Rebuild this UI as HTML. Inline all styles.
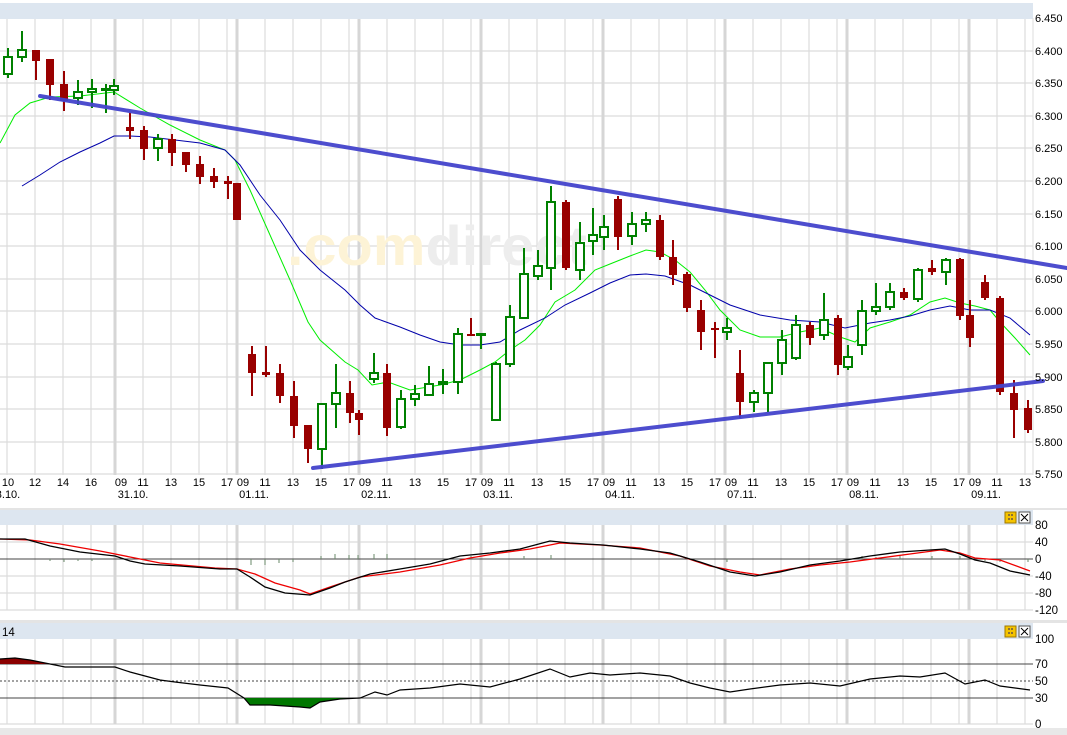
<!DOCTYPE html>
<html><head><meta charset="utf-8"><style>
html,body{margin:0;padding:0;background:#fff;}
svg{display:block;font-family:"Liberation Sans",sans-serif;}
</style></head><body>
<svg width="1067" height="735" viewBox="0 0 1067 735" xmlns="http://www.w3.org/2000/svg">
<rect width="1067" height="735" fill="#fff"/>
<!-- headers -->
<rect x="0" y="3" width="1033" height="16" fill="#dde6f0"/>
<rect x="0" y="508" width="1067" height="2" fill="#e4e4e4"/>
<rect x="0" y="510" width="1033" height="15" fill="#dde6f0"/>
<rect x="0" y="620" width="1067" height="3" fill="#e4e4e4"/>
<rect x="0" y="623" width="1033" height="16" fill="#dde6f0"/>
<rect x="0" y="728" width="1067" height="7" fill="#e8e8e8"/>
<line x1="1033" y1="18" x2="1033" y2="475" stroke="#ddd"/>
<!-- vertical grid -->
<g stroke="#dcdcdc" stroke-width="1.2">
<path d="M7 19V475M35 19V475M63 19V475M91 19V475M143 19V475M171 19V475M199 19V475M227 19V475M265 19V475M293 19V475M321 19V475M349 19V475M387 19V475M415 19V475M443 19V475M471 19V475M509 19V475M537 19V475M565 19V475M593 19V475M631 19V475M659 19V475M687 19V475M715 19V475M753 19V475M781 19V475M809 19V475M837 19V475M875 19V475M903 19V475M931 19V475M959 19V475M997 19V475M1025 19V475"/>
<path d="M7 525V610M35 525V610M63 525V610M91 525V610M143 525V610M171 525V610M199 525V610M227 525V610M265 525V610M293 525V610M321 525V610M349 525V610M387 525V610M415 525V610M443 525V610M471 525V610M509 525V610M537 525V610M565 525V610M593 525V610M631 525V610M659 525V610M687 525V610M715 525V610M753 525V610M781 525V610M809 525V610M837 525V610M875 525V610M903 525V610M931 525V610M959 525V610M997 525V610M1025 525V610"/>
<path d="M7 639V724M35 639V724M63 639V724M91 639V724M143 639V724M171 639V724M199 639V724M227 639V724M265 639V724M293 639V724M321 639V724M349 639V724M387 639V724M415 639V724M443 639V724M471 639V724M509 639V724M537 639V724M565 639V724M593 639V724M631 639V724M659 639V724M687 639V724M715 639V724M753 639V724M781 639V724M809 639V724M837 639V724M875 639V724M903 639V724M931 639V724M959 639V724M997 639V724M1025 639V724"/>
<path d="M0 51H1033M0 83H1033M0 116H1033M0 148H1033M0 181H1033M0 214H1033M0 246H1033M0 279H1033M0 311H1033M0 344H1033M0 377H1033M0 409H1033M0 442H1033M0 474H1033"/>
<path d="M0 542H1033M0 576H1033M0 593H1033M0 610H1033M0 724H1033"/>
</g>
<g stroke="#d6d6d6" stroke-width="3">
<path d="M115 19V475M237 19V475M359 19V475M481 19V475M603 19V475M725 19V475M847 19V475M969 19V475"/>
<path d="M115 525V610M237 525V610M359 525V610M481 525V610M603 525V610M725 525V610M847 525V610M969 525V610"/>
<path d="M115 639V724M237 639V724M359 639V724M481 639V724M603 639V724M725 639V724M847 639V724M969 639V724"/>
</g>
<!-- watermark -->
<text x="287" y="265" font-size="56" font-weight="bold" fill="#fdf3d6" textLength="300" lengthAdjust="spacingAndGlyphs">.com<tspan fill="#ededed">direct</tspan></text>
<!-- MAs -->
<polyline fill="none" stroke="#00ee00" stroke-width="1" points="0,143 15,115 30,103 50,97 80,96 114,92 140,108 170,125 200,140 225,150 235,160 250,190 270,235 290,280 308,322 320,340 345,362 358,370 372,385 388,382 410,390 440,385 460,380 480,370 495,362 510,350 525,340 540,325 555,302 575,290 595,270 610,264 630,256 646,250 660,252 675,260 690,272 705,290 720,310 740,330 760,337 780,337 800,332 820,328 840,337 855,342 870,328 890,322 910,315 930,302 945,298 960,303 975,306 990,310 1000,322 1015,338 1030,355"/>
<polyline fill="none" stroke="#0000aa" stroke-width="1" points="22,186 40,175 60,162 80,152 100,143 114,136 130,136 150,137 175,140 200,143 225,150 240,165 260,195 280,220 300,250 320,270 345,290 360,305 375,318 400,327 420,335 440,342 460,345 480,345 500,342 520,330 545,318 565,305 590,293 610,283 630,275 646,274 665,276 690,285 710,295 730,305 760,315 790,320 820,322 845,328 870,323 890,320 910,316 930,310 950,306 970,310 990,310 1010,318 1030,335"/>
<!-- red candles -->
<g stroke="#990000" stroke-width="2" fill="#990000">
<path d="M36 50V80M50 59V100M64 71V111M130 113V139M144 126V160M172 134V166M186 153V172M200 156V184M214 168V188M228 176V199M240 183V220M252 346V396M266 346V377M280 364V403M294 381V438M308 425V463M350 381V423M359 410V435M387 364V436M471 318V335M566 200V270M618 196V250M660 215V260M673 240V285M687 272V312M701 300V350M715 322V358M740 350V418M810 322V345M838 315V375M904 288V300M932 260V275M960 258V320M970 300V347M985 275V300M1000 296V395M1014 380V438M1028 400V433" fill="none"/>
</g>
<g fill="#990000">
<rect x="32" y="50" width="8" height="11"/><rect x="46" y="59" width="8" height="26"/><rect x="60" y="84" width="8" height="17"/>
<rect x="126" y="127" width="8" height="4"/><rect x="140" y="130" width="8" height="19"/><rect x="168" y="139" width="8" height="14"/>
<rect x="182" y="152" width="8" height="13"/><rect x="196" y="164" width="8" height="13"/><rect x="210" y="176" width="8" height="6"/>
<rect x="224" y="181" width="8" height="3"/><rect x="233" y="183" width="8" height="37"/><rect x="248" y="354" width="8" height="19"/>
<rect x="262" y="372" width="8" height="3"/><rect x="276" y="373" width="8" height="23"/><rect x="290" y="396" width="8" height="30"/>
<rect x="304" y="425" width="8" height="24"/><rect x="346" y="393" width="8" height="20"/><rect x="355" y="413" width="8" height="7"/>
<rect x="383" y="373" width="8" height="55"/><rect x="467" y="334" width="8" height="2"/><rect x="562" y="202" width="8" height="66"/>
<rect x="614" y="199" width="8" height="38"/><rect x="656" y="220" width="8" height="37"/><rect x="669" y="257" width="8" height="18"/>
<rect x="683" y="274" width="8" height="34"/><rect x="697" y="310" width="8" height="22"/><rect x="711" y="328" width="8" height="2"/>
<rect x="736" y="373" width="8" height="29"/><rect x="806" y="325" width="8" height="13"/><rect x="834" y="318" width="8" height="47"/>
<rect x="900" y="292" width="8" height="6"/><rect x="928" y="268" width="8" height="4"/><rect x="956" y="259" width="8" height="57"/>
<rect x="966" y="315" width="8" height="23"/><rect x="981" y="282" width="8" height="16"/><rect x="996" y="298" width="8" height="94"/>
<rect x="1010" y="393" width="8" height="17"/><rect x="1024" y="408" width="8" height="22"/>
</g>
<!-- green candles -->
<g stroke="#008000" stroke-width="2" fill="#fff">
<path d="M8 48V78M22 31V62M78 80V105M92 79V108M106 84V113M114 79V95M158 134V161M322 403V469M336 364V428M374 353V383M401 390V429M415 385V406M429 366V395M443 369V394M458 328V394M481 334V349M496 362V421M510 305V367M524 248V318M538 250V280M551 186V290M580 222V280M593 208V255M604 215V250M632 212V245M646 212V232M727 318V340M754 390V412M768 362V412M782 330V375M796 315V360M824 293V340M848 345V370M862 300V355M876 283V315M890 283V310M918 268V302M946 258V285"/>
<rect x="4" y="57" width="8" height="17"/><rect x="18" y="50" width="8" height="7"/><rect x="74" y="92" width="8" height="6"/>
<rect x="88" y="89" width="8" height="3"/><rect x="102" y="89" width="8" height="1"/><rect x="110" y="86" width="8" height="4"/>
<rect x="154" y="139" width="8" height="9"/><rect x="318" y="404" width="8" height="45"/><rect x="332" y="393" width="8" height="11"/>
<rect x="370" y="373" width="8" height="6"/><rect x="397" y="399" width="8" height="28"/><rect x="411" y="394" width="8" height="5"/>
<rect x="425" y="384" width="8" height="11"/><rect x="439" y="382" width="8" height="2"/><rect x="454" y="334" width="8" height="48"/>
<rect x="477" y="334" width="8" height="1"/><rect x="492" y="364" width="8" height="56"/><rect x="506" y="317" width="8" height="47"/>
<rect x="520" y="274" width="8" height="44"/><rect x="534" y="266" width="8" height="10"/><rect x="547" y="202" width="8" height="66"/>
<rect x="576" y="243" width="8" height="27"/><rect x="589" y="235" width="8" height="6"/><rect x="600" y="227" width="8" height="10"/>
<rect x="628" y="224" width="8" height="12"/><rect x="642" y="220" width="8" height="4"/><rect x="723" y="328" width="8" height="4"/>
<rect x="750" y="393" width="8" height="9"/><rect x="764" y="363" width="8" height="30"/><rect x="778" y="340" width="8" height="23"/>
<rect x="792" y="325" width="8" height="33"/><rect x="820" y="320" width="8" height="15"/><rect x="844" y="357" width="8" height="10"/>
<rect x="858" y="311" width="8" height="34"/><rect x="872" y="307" width="8" height="4"/><rect x="886" y="292" width="8" height="15"/>
<rect x="914" y="270" width="8" height="29"/><rect x="942" y="260" width="8" height="12"/>
</g>
<!-- trendlines -->
<g stroke="#4444cc" stroke-width="4" stroke-linecap="round" opacity="0.95">
<line x1="40" y1="96" x2="1067" y2="268"/>
<line x1="313" y1="468" x2="1043" y2="381"/>
</g>
<!-- axis labels main -->
<g font-size="11" fill="#000">
<text x="1035" y="22">6.450</text><text x="1035" y="55">6.400</text><text x="1035" y="87">6.350</text><text x="1035" y="120">6.300</text>
<text x="1035" y="152">6.250</text><text x="1035" y="185">6.200</text><text x="1035" y="218">6.150</text><text x="1035" y="250">6.100</text>
<text x="1035" y="283">6.050</text><text x="1035" y="315">6.000</text><text x="1035" y="348">5.950</text><text x="1035" y="381">5.900</text>
<text x="1035" y="413">5.850</text><text x="1035" y="446">5.800</text><text x="1035" y="478">5.750</text>
</g>
<g font-size="11" fill="#000" text-anchor="middle">
<text x="8" y="486">10</text><text x="35" y="486">12</text><text x="63" y="486">14</text><text x="91" y="486">16</text>
<text x="121" y="486">09</text><text x="143" y="486">11</text><text x="171" y="486">13</text><text x="199" y="486">15</text><text x="227" y="486">17</text>
<text x="243" y="486">09</text><text x="265" y="486">11</text><text x="293" y="486">13</text><text x="321" y="486">15</text><text x="349" y="486">17</text>
<text x="365" y="486">09</text><text x="387" y="486">11</text><text x="415" y="486">13</text><text x="443" y="486">15</text><text x="471" y="486">17</text>
<text x="487" y="486">09</text><text x="509" y="486">11</text><text x="537" y="486">13</text><text x="565" y="486">15</text><text x="593" y="486">17</text>
<text x="609" y="486">09</text><text x="631" y="486">11</text><text x="659" y="486">13</text><text x="687" y="486">15</text><text x="715" y="486">17</text>
<text x="731" y="486">09</text><text x="753" y="486">11</text><text x="781" y="486">13</text><text x="809" y="486">15</text><text x="837" y="486">17</text>
<text x="853" y="486">09</text><text x="875" y="486">11</text><text x="903" y="486">13</text><text x="931" y="486">15</text><text x="959" y="486">17</text>
<text x="975" y="486">09</text><text x="997" y="486">11</text><text x="1025" y="486">13</text>
<text x="8" y="498">3.10.</text><text x="133" y="498">31.10.</text><text x="254" y="498">01.11.</text><text x="376" y="498">02.11.</text>
<text x="498" y="498">03.11.</text><text x="620" y="498">04.11.</text><text x="742" y="498">07.11.</text><text x="864" y="498">08.11.</text><text x="986" y="498">09.11.</text>
</g>
<!-- panel icons -->
<g>
<rect x="1005" y="512" width="11" height="11" fill="#f5c400" stroke="#a07800"/>
<path d="M1008 515h2M1011 515h2M1008 519h2M1011 519h2" stroke="#654" stroke-width="1.5"/>
<rect x="1019" y="512" width="11" height="11" fill="#fff" stroke="#555"/>
<path d="M1021 514l7 7M1028 514l-7 7" stroke="#000"/>
<rect x="1005" y="626" width="11" height="11" fill="#f5c400" stroke="#a07800"/>
<path d="M1008 629h2M1011 629h2M1008 633h2M1011 633h2" stroke="#654" stroke-width="1.5"/>
<rect x="1019" y="626" width="11" height="11" fill="#fff" stroke="#555"/>
<path d="M1021 628l7 7M1028 628l-7 7" stroke="#000"/>
</g>
<!-- MACD -->
<line x1="0" y1="559" x2="1033" y2="559" stroke="#444"/>
<g stroke="#6a8a6a"><path d="M50 559v2M64 559v3M78 559v2M92 559v2M251 559v6M265 559v6M279 559v4M293 559v3M321 559v-3M335 559v-5M349 559v-4M358 559v-4M374 559v-5M387 559v-5M471 559v-3M524 559v-3M551 559v-4M727 559v3M862 559v-3M876 559v-2M900 559v-3M932 559v-3M960 559v-3M985 559v2M1000 559v3M1028 559v3"/></g>
<polyline fill="none" stroke="#ee0000" stroke-width="1.3" points="0,539 30,540 60,544 100,551 130,557 160,563 215,568 237,569 255,574 275,583 300,590 310,594 330,587 360,577 400,572 440,565 470,558 500,553 530,549 560,543 600,545 640,548 680,556 710,566 740,572 760,575 790,569 820,565 850,562 880,558 910,554 940,550 960,553 975,558 1000,560 1030,571"/>
<polyline fill="none" stroke="#000" stroke-width="1.3" points="0,539 25,539 50,546 80,552 115,556 130,561 145,564 180,566 220,569 237,569 250,577 265,587 285,593 310,595 330,588 345,582 370,574 400,569 430,564 460,556 490,553 520,549 550,541 570,543 603,545 640,549 670,553 700,562 730,572 755,576 780,572 810,565 840,561 870,556 900,552 930,550 945,549 960,554 975,560 990,563 1010,571 1030,575"/>
<g font-size="11.5" fill="#000">
<text x="1035" y="529">80</text><text x="1035" y="546">40</text><text x="1035" y="563">0</text><text x="1035" y="580">-40</text><text x="1035" y="597">-80</text><text x="1035" y="614">-120</text>
</g>
<!-- RSI -->
<text x="2" y="636" font-size="11.5">14</text>
<line x1="0" y1="664" x2="1033" y2="664" stroke="#444"/>
<line x1="0" y1="681" x2="1033" y2="681" stroke="#444" stroke-dasharray="2,2"/>
<line x1="0" y1="698" x2="1033" y2="698" stroke="#444"/>
<polygon fill="#8b0000" points="0,664 0,659 15,658 30,660 50,664"/>
<polygon fill="#007700" points="244,698 250,705 270,705 300,707 310,708 320,702 340,699 360,698"/>
<polyline fill="none" stroke="#000" stroke-width="1.2" points="0,659 15,658 30,660 50,664 65,667 90,667 115,667 130,672 145,676 160,680 175,682 200,685 228,688 244,698 250,705 270,705 300,707 310,708 320,702 340,699 360,698 375,692 387,695 400,690 430,688 460,684 490,687 520,679 550,669 570,677 590,673 610,675 640,673 670,676 690,683 710,688 730,692 750,689 780,685 810,683 840,686 870,679 900,676 920,677 945,673 965,684 985,680 1000,686 1015,688 1030,690"/>
<g font-size="11.5" fill="#000">
<text x="1035" y="643">100</text><text x="1035" y="668">70</text><text x="1035" y="685">50</text><text x="1035" y="702">30</text><text x="1035" y="728">0</text>
</g>
</svg>
</body></html>
